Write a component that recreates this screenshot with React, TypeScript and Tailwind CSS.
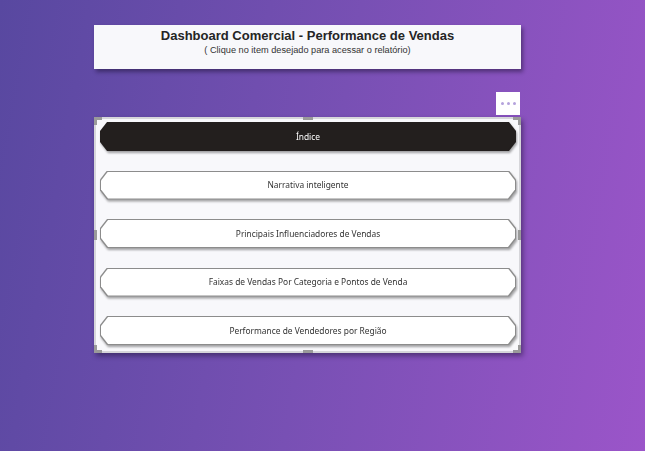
const ITEMS = [
  "Narrativa inteligente",
  "Principais Influenciadores de Vendas",
  "Faixas de Vendas Por Categoria e Pontos de Venda",
  "Performance de Vendedores por Região",
];

const chamfer =
  "[clip-path:polygon(7px_0,calc(100%_-_7px)_0,100%_9px,100%_calc(100%_-_9px),calc(100%_-_7px)_100%,7px_100%,0_calc(100%_-_9px),0_9px)]";

function NavButton({ label, active }: { label: string; active?: boolean }) {
  return (
    <div className="drop-shadow-[1px_2px_1px_rgba(0,0,0,0.35)]">
      <div
        className={`h-[29px] p-px ${chamfer} ${
          active ? "bg-[#231f1e]" : "bg-[#8c8c8c]"
        }`}
      >
        <div
          className={`flex h-full items-center justify-center pt-px ${chamfer} ${
            active ? "bg-[#231f1e] text-white" : "bg-white text-[#333]"
          } font-['Noto_Sans',sans-serif] text-[8.4px]`}
        >
          {label}
        </div>
      </div>
    </div>
  );
}

function Handles() {
  return (
    <>
      <span className="absolute -left-[2px] -top-[2px] h-[8px] w-[8px] border-l-[3px] border-t-[3px] border-[#9a9a9a]" />
      <span className="absolute -right-[2px] -top-[2px] h-[8px] w-[8px] border-r-[3px] border-t-[3px] border-[#9a9a9a]" />
      <span className="absolute -bottom-[2px] -left-[2px] h-[8px] w-[8px] border-b-[3px] border-l-[3px] border-[#9a9a9a]" />
      <span className="absolute -bottom-[2px] -right-[2px] h-[8px] w-[8px] border-b-[3px] border-r-[3px] border-[#9a9a9a]" />
      <span className="absolute -top-[2px] left-1/2 h-[3px] w-[10px] -translate-x-1/2 bg-[#9a9a9a]" />
      <span className="absolute -bottom-[2px] left-1/2 h-[3px] w-[10px] -translate-x-1/2 bg-[#9a9a9a]" />
      <span className="absolute -left-[2px] top-1/2 h-[10px] w-[3px] -translate-y-1/2 bg-[#9a9a9a]" />
      <span className="absolute -right-[2px] top-1/2 h-[10px] w-[3px] -translate-y-1/2 bg-[#9a9a9a]" />
    </>
  );
}

export default function App() {
  return (
    <div className="h-[451px] w-[645px] overflow-hidden bg-[linear-gradient(100deg,#5848a0_0%,#7850b4_50%,#9b55c9_100%)]">
      <div className="ml-[94px] flex w-[427px] flex-col">
        <header className="mt-[25px] flex h-[44px] flex-col items-center bg-[#f8f8fb] pt-[2px] shadow-[2px_3px_4px_rgba(20,10,40,0.45)] font-['Liberation_Sans',Arial,sans-serif]">
          <h1 className="text-[13px] leading-[17px] font-bold text-[#252525]">
            Dashboard Comercial - Performance de Vendas
          </h1>
          <p className="text-[9.2px] leading-[12px] text-[#333]">
            ( Clique no item desejado para acessar o relatório)
          </p>
        </header>

        <div className="mt-[23px] mr-px flex h-[23px] w-[24px] items-center justify-center gap-[3px] self-end bg-white">
          <span className="h-[3px] w-[3px] rounded-full bg-[#b4a2dc]" />
          <span className="h-[3px] w-[3px] rounded-full bg-[#b4a2dc]" />
          <span className="h-[3px] w-[3px] rounded-full bg-[#b4a2dc]" />
        </div>

        <section className="relative mt-[2px] flex h-[236px] flex-col gap-[19.5px] border-2 border-[#d6d6da] bg-[#f8f8fb] pt-[3px] pr-[3px] pl-[4px] shadow-[2px_3px_5px_rgba(20,10,40,0.45)]">
          <NavButton label="Índice" active />
          {ITEMS.map((item) => (
            <NavButton key={item} label={item} />
          ))}
          <Handles />
        </section>
      </div>
    </div>
  );
}
